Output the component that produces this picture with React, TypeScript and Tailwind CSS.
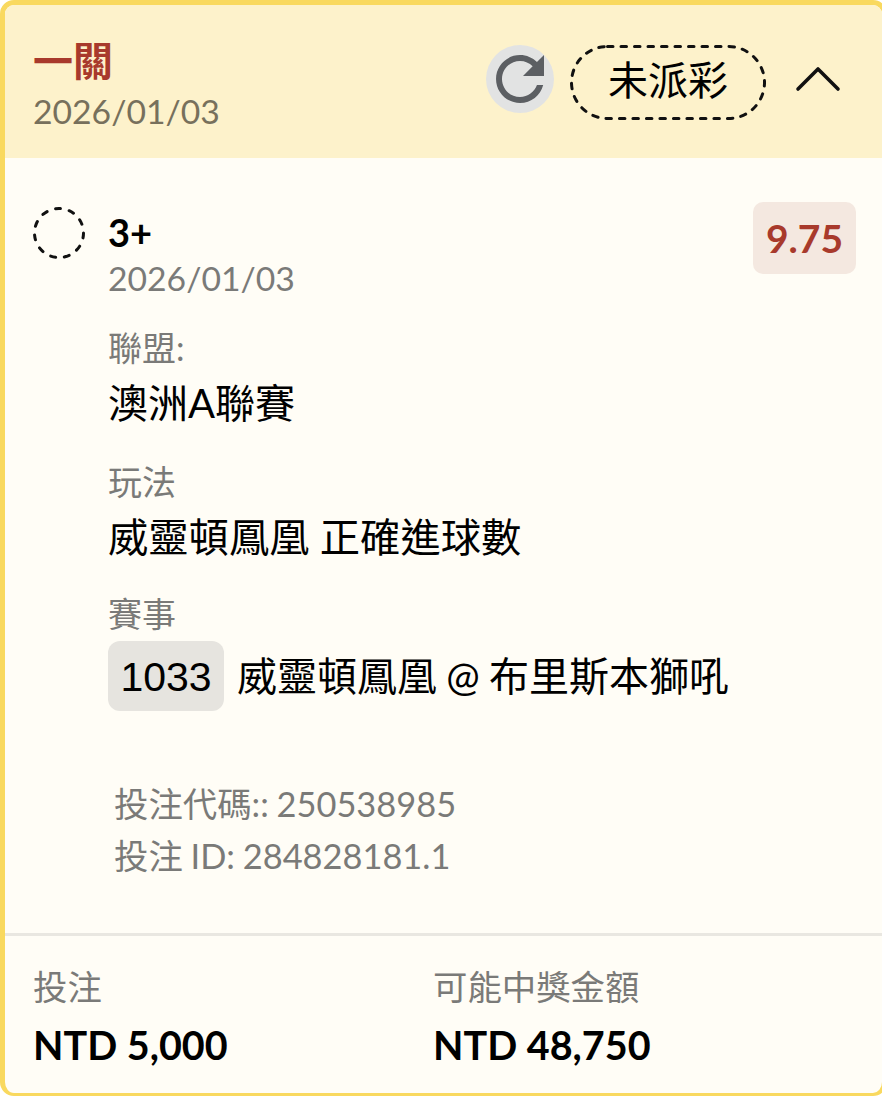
function Label({ children }: { children: React.ReactNode }) {
  return <div className="text-[34px] leading-[44px] text-[#7a7a78]">{children}</div>
}

export default function App() {
  return (
    <div className="h-[1096px] w-[882px] overflow-hidden font-['Lato','Noto_Sans_CJK_TC',sans-serif] text-black">
      <div className="flex h-[1096px] w-[887px] flex-col overflow-hidden rounded-[14px] border-[5px] border-b-[3px] border-[#f9d95f] bg-[#fffdf6]">
        <div className="flex h-[153px] shrink-0 items-start justify-between bg-[#fdf2cb] pl-[28px] pr-[40px]">
          <div className="pt-[31px]">
            <div className="text-[40px] font-bold leading-[50px] text-[#a83a2c]">一關</div>
            <div className="text-[33.7px] leading-[50px] text-[#77705c]">2026/01/03</div>
          </div>
          <div className="flex items-start pt-[40px]">
            <div className="flex h-[68px] w-[68px] items-center justify-center rounded-full bg-[#e2e3e3]">
              <svg viewBox="0 0 24 24" className="h-[72px] w-[72px] shrink-0" fill="#5c5f63">
                <path d="M17.65 6.35C16.2 4.9 14.21 4 12 4c-4.42 0-7.99 3.58-7.99 8s3.57 8 7.99 8c3.73 0 6.84-2.55 7.73-6h-2.08c-.82 2.33-3.04 4-5.65 4-3.31 0-6-2.69-6-6s2.69-6 6-6c1.66 0 3.14.69 4.22 1.78L13 11h7V4l-2.35 2.35z" />
              </svg>
            </div>
            <div className="relative ml-[16px] flex h-[75px] w-[196px] items-center justify-center pb-[6px] text-[40px] leading-none">
              <svg viewBox="0 0 196 75" className="absolute inset-0 h-[75px] w-[196px]" fill="none" stroke="#111" strokeWidth="3" strokeDasharray="5.5 8" strokeLinecap="round">
                <rect x="1.5" y="1.5" width="193" height="72" rx="36" />
              </svg>
              未派彩
            </div>
            <svg viewBox="0 0 48 28" className="ml-[28px] mt-[19px] h-[28px] w-[48px]" fill="none" stroke="#111" strokeWidth="3.6" strokeLinecap="round" strokeLinejoin="round">
              <path d="M4 25 24 5l20 20" />
            </svg>
          </div>
        </div>

        <div className="flex flex-1 flex-col">
          <div className="flex items-start pl-[28px] pr-[26px] pt-[44px]">
            <svg viewBox="0 0 52 52" className="mt-[5px] h-[52px] w-[52px] shrink-0" fill="none" stroke="#111" strokeWidth="3" strokeDasharray="5 8.9" strokeLinecap="round">
              <circle cx="26" cy="26" r="24.5" />
            </svg>
            <div className="ml-[23px] mt-[5px] flex-1">
              <div className="text-[38px] font-bold leading-[50px]">3+</div>
              <div className="text-[33.7px] leading-[42px] text-[#7a7a78]">2026/01/03</div>
              <div className="mt-[27px]">
                <Label>聯盟:</Label>
                <div className="text-[40px] leading-[66px]">澳洲A聯賽</div>
              </div>
              <div className="mt-[24px]">
                <Label>玩法</Label>
                <div className="text-[40.3px] leading-[66px]">威靈頓鳳凰 正確進球數</div>
              </div>
              <div className="mt-[22px]">
                <Label>賽事</Label>
                <div className="mt-[5px] flex items-center">
                  <div className="flex h-[70px] w-[116px] items-center justify-center rounded-[12px] bg-[#e6e4df] pt-[3px] font-['Liberation_Sans',sans-serif] text-[41px]">1033</div>
                  <div className="ml-[13px] text-[40px] leading-none [word-spacing:-1px]">威靈頓鳳凰 @ 布里斯本獅吼</div>
                </div>
              </div>
            </div>
            <div className="flex h-[72px] w-[103px] shrink-0 items-center justify-center rounded-[10px] bg-[#f4e8e0] text-[39px] font-bold text-[#a83a2c]">
              9.75
            </div>
          </div>

          <div className="mt-[67px] pl-[109px] text-[34.4px] leading-[52px] text-[#7a7a78] [word-spacing:-1px]">
            <div>投注代碼:: 250538985</div>
            <div>投注 ID: 284828181.1</div>
          </div>

          <div className="mt-auto flex h-[160px] border-t-[3px] border-[#e9e7e1] pl-[28px] pt-[28px]">
            <div className="w-[400px]">
              <div className="text-[34.4px] leading-[46px] text-[#7a7a78]">投注</div>
              <div className="mt-[10px] text-[39.5px] font-bold leading-[50px]">NTD 5,000</div>
            </div>
            <div>
              <div className="text-[34.4px] leading-[46px] text-[#7a7a78]">可能中獎金額</div>
              <div className="mt-[10px] text-[39.5px] font-bold leading-[50px]">NTD 48,750</div>
            </div>
          </div>
        </div>
      </div>
    </div>
  )
}
